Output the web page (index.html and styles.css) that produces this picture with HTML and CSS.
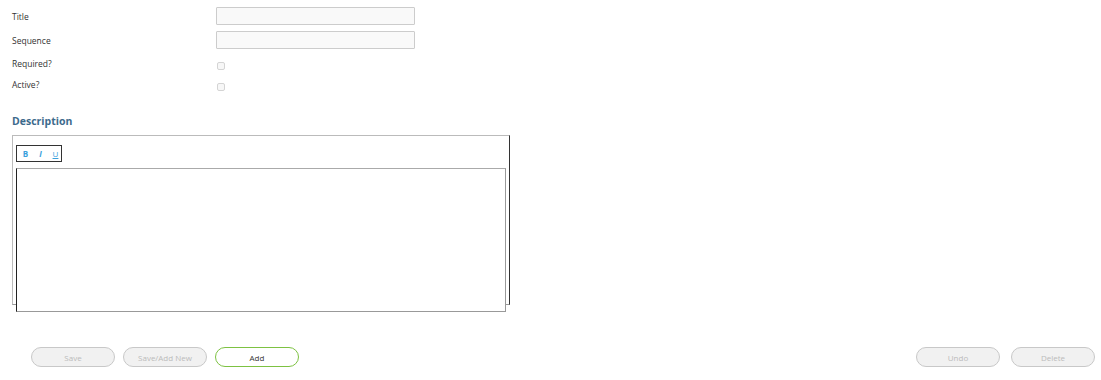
FILE: index.html
```html
<!DOCTYPE html>
<html lang="en">
<head>
    <meta charset="UTF-8">
    <title>Edit Item</title>
    <link rel="stylesheet" href="styles.css">
</head>
<body>
    <div class="form">
        <div class="row">
            <label class="lbl">Title</label>
            <input type="text" class="txt">
        </div>
        <div class="row">
            <label class="lbl">Sequence</label>
            <input type="text" class="txt">
        </div>
        <div class="row check-row">
            <label class="lbl">Required?</label>
            <span class="chk"></span>
        </div>
        <div class="row check-row">
            <label class="lbl">Active?</label>
            <span class="chk"></span>
        </div>
    </div>

    <h3 class="section-title">Description</h3>
    <div class="editor">
        <div class="toolbar">
            <span class="tb-btn tb-b">B</span>
            <span class="tb-btn tb-i">I</span>
            <span class="tb-btn tb-u">U</span>
        </div>
        <div class="edit-area"></div>
    </div>

    <div class="actions">
        <div class="btn-group">
            <button class="btn disabled">Save</button>
            <button class="btn disabled">Save/Add New</button>
            <button class="btn primary">Add</button>
        </div>
        <div class="btn-group right">
            <button class="btn disabled">Undo</button>
            <button class="btn disabled">Delete</button>
        </div>
    </div>
</body>
</html>
```

FILE: styles.css
```css
body { margin: 0; font-family: "Open Sans", "DejaVu Sans", sans-serif; color: #333; background: #fff; }
.form { padding: 7px 0 0 12px; }
.row { display: flex; align-items: center; height: 18px; margin-bottom: 6px; }
.check-row { height: 21px; margin-bottom: 0; }
.lbl { width: 204px; font-size: 8.5px; color: #333; }
.check-row .lbl { position: relative; top: -2px; }
.txt { width: 199px; height: 18px; box-sizing: border-box; border: 1px solid #ccc; border-radius: 1px; background: #f9f9f9; padding: 0 4px; margin: 0; }
.chk { width: 8px; height: 8px; margin-left: 1px; border: 1px solid #d4d4d4; border-radius: 2px; background: #f7f7f7; box-sizing: border-box; }
.section-title { margin: 16px 0 5px 12px; font-size: 10.5px; font-weight: bold; color: #3d6a8c; height: 17px; line-height: 17px; }
.editor { margin: 0 0 0 12px; width: 498px; height: 170px; box-sizing: border-box; border-top: 1px solid #bbb; border-left: 1px solid #bbb; border-right: 1px solid #333; border-bottom: 1px solid #999; padding: 9px 0 0 3px; }
.toolbar { display: flex; align-items: center; width: 46px; height: 17px; box-sizing: border-box; border: 1px solid #333; padding-left: 5px; gap: 8px; }
.tb-btn { font-size: 8px; color: #3aa0dc; width: 7px; text-align: center; line-height: 10px; }
.tb-b { font-weight: bold; }
.tb-i { font-style: italic; font-weight: bold; }
.tb-u { text-decoration: underline; }
.edit-area { margin-top: 6px; width: 490px; height: 144px; box-sizing: border-box; border-top: 1px solid #aaa; border-left: 1px solid #222; border-right: 1px solid #999; border-bottom: 1px solid #999; background: #fff; }
.actions { display: flex; justify-content: space-between; padding: 0 6px 0 31px; margin-top: 42px; }
.btn-group { display: flex; gap: 8px; }
.btn-group.right { gap: 11px; }
.btn { width: 84px; height: 20px; border-radius: 10px; font-family: "Open Sans", "DejaVu Sans", sans-serif; font-size: 8px; padding: 0; cursor: pointer; }
.btn.disabled { background: #f1f1f1; border: 1px solid #c8c8c8; color: #bbb; }
.btn.primary { background: #fff; border: 1.5px solid #7dc242; color: #333; }
```
